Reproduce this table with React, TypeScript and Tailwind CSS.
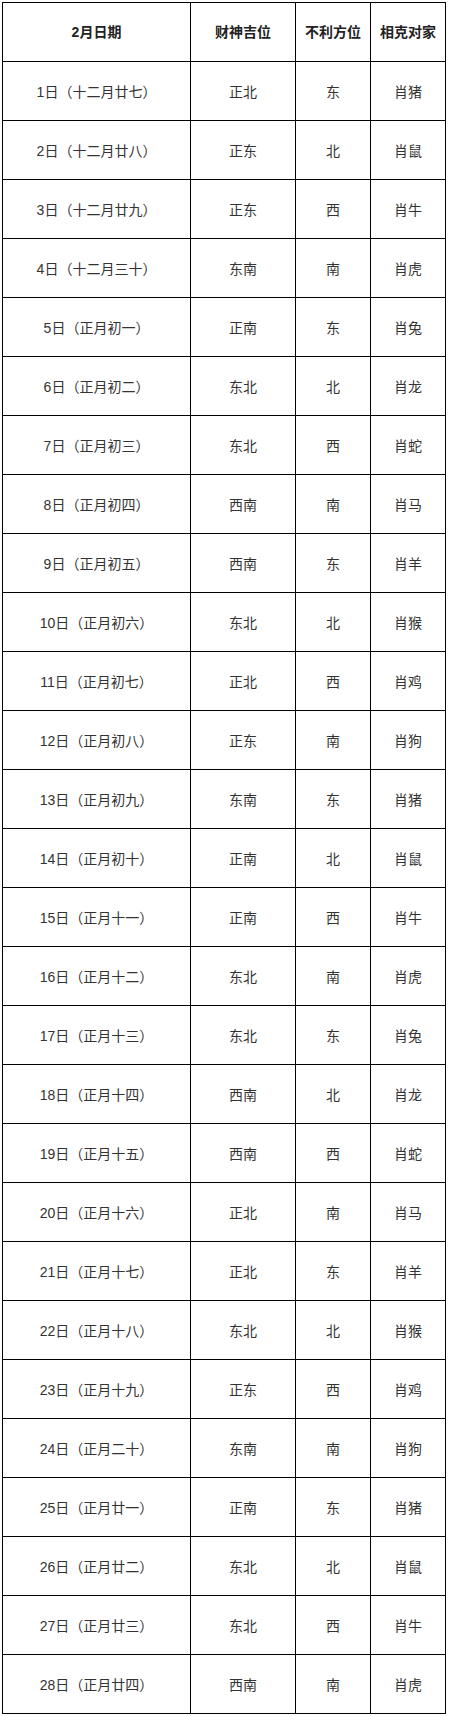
const rows: [string, string, string, string][] = [
  ["1日（十二月廿七）", "正北", "东", "肖猪"],
  ["2日（十二月廿八）", "正东", "北", "肖鼠"],
  ["3日（十二月廿九）", "正东", "西", "肖牛"],
  ["4日（十二月三十）", "东南", "南", "肖虎"],
  ["5日（正月初一）", "正南", "东", "肖兔"],
  ["6日（正月初二）", "东北", "北", "肖龙"],
  ["7日（正月初三）", "东北", "西", "肖蛇"],
  ["8日（正月初四）", "西南", "南", "肖马"],
  ["9日（正月初五）", "西南", "东", "肖羊"],
  ["10日（正月初六）", "东北", "北", "肖猴"],
  ["11日（正月初七）", "正北", "西", "肖鸡"],
  ["12日（正月初八）", "正东", "南", "肖狗"],
  ["13日（正月初九）", "东南", "东", "肖猪"],
  ["14日（正月初十）", "正南", "北", "肖鼠"],
  ["15日（正月十一）", "正南", "西", "肖牛"],
  ["16日（正月十二）", "东北", "南", "肖虎"],
  ["17日（正月十三）", "东北", "东", "肖兔"],
  ["18日（正月十四）", "西南", "北", "肖龙"],
  ["19日（正月十五）", "西南", "西", "肖蛇"],
  ["20日（正月十六）", "正北", "南", "肖马"],
  ["21日（正月十七）", "正北", "东", "肖羊"],
  ["22日（正月十八）", "东北", "北", "肖猴"],
  ["23日（正月十九）", "正东", "西", "肖鸡"],
  ["24日（正月二十）", "东南", "南", "肖狗"],
  ["25日（正月廿一）", "正南", "东", "肖猪"],
  ["26日（正月廿二）", "东北", "北", "肖鼠"],
  ["27日（正月廿三）", "东北", "西", "肖牛"],
  ["28日（正月廿四）", "西南", "南", "肖虎"],
];

export default function App() {
  return (
    <div className="w-[449px] bg-white pt-[2px] pl-[2px] font-['Liberation_Sans','Noto_Sans_CJK_SC',sans-serif] text-[14px] text-[#333]">
      <table className="w-[443px] table-fixed border-collapse">
        <colgroup>
          <col className="w-[188px]" />
          <col className="w-[105px]" />
          <col className="w-[75px]" />
          <col className="w-[75px]" />
        </colgroup>
        <thead>
          <tr className="h-[59px]">
            {["2月日期", "财神吉位", "不利方位", "相克对家"].map((h) => (
              <th key={h} className="border border-black text-center font-bold text-[#222]">
                {h}
              </th>
            ))}
          </tr>
        </thead>
        <tbody>
          {rows.map((r) => (
            <tr key={r[0]} className="h-[59px]">
              {r.map((c, i) => (
                <td key={i} className="border border-black pt-[2px] text-center">
                  {c}
                </td>
              ))}
            </tr>
          ))}
        </tbody>
      </table>
    </div>
  );
}
